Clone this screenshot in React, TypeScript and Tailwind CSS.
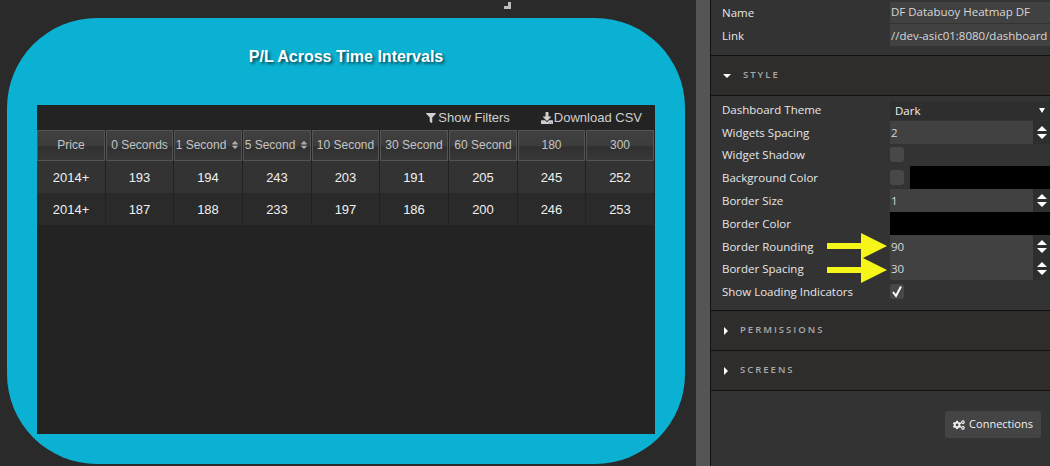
import { FaCogs, FaDownload, FaFilter, FaSort } from 'react-icons/fa';

const columns = ['Price', '0 Seconds', '1 Second', '5 Second', '10 Second', '30 Second', '60 Second', '180', '300'];
const sortable = ['1 Second', '5 Second'];
const rows = [
  ['2014+', '193', '194', '243', '203', '191', '205', '245', '252'],
  ['2014+', '187', '188', '233', '197', '186', '200', '246', '253'],
];

function Spinner() {
  return (
    <div className="flex h-full w-[17px] shrink-0 flex-col items-center justify-center gap-[3px] bg-[#2e2e2e]">
      <div className="h-0 w-0 border-x-[5px] border-b-[5px] border-x-transparent border-b-white" />
      <div className="h-0 w-0 border-x-[5px] border-t-[5px] border-x-transparent border-t-white" />
    </div>
  );
}

function NumberField({ value }: { value: string }) {
  return (
    <div className="flex h-full items-center">
      <div className="flex h-full flex-1 items-center bg-[#414141] pl-[1px] text-[11.5px] text-[#d8d8d8]">{value}</div>
      <Spinner />
    </div>
  );
}

function Checkbox({ checked }: { checked?: boolean }) {
  return (
    <div className="flex h-[15px] w-[14px] shrink-0 items-center justify-center rounded-[3px] bg-[#484848]">
      {checked && (
        <svg width="12" height="13" viewBox="0 0 12 13">
          <path d="M2 7 L5 11 L10 1.5" fill="none" stroke="#fff" strokeWidth="2" />
        </svg>
      )}
    </div>
  );
}

function Row({ label, children }: { label: string; children?: React.ReactNode }) {
  return (
    <div className="flex h-[22.8px] items-center">
      <div className="w-[179px] shrink-0 pl-[11px] text-[11.5px] text-[#e6e6e6]">{label}</div>
      <div className="h-full flex-1 overflow-hidden">{children}</div>
    </div>
  );
}

function Section({ title, open }: { title: string; open?: boolean }) {
  return (
    <div className="flex h-[40px] items-center gap-[11px] border-b border-[#111] bg-[#2e2d2c] pl-[12px]">
      {open ? (
        <div className="h-0 w-0 border-x-[4px] border-t-[4px] border-x-transparent border-t-white" />
      ) : (
        <div className="ml-[1px] h-0 w-0 border-y-[4px] border-l-[4px] border-y-transparent border-l-white" />
      )}
      <span className="pl-[1px] text-[9.5px] font-semibold tracking-[2px] text-[#a9a9a9]">{title}</span>
    </div>
  );
}

function Arrow({ top }: { top: number }) {
  return (
    <svg className="absolute left-[827px]" style={{ top }} width="62" height="26" viewBox="0 0 62 26">
      <path d="M0 10 H34 V0 L60 13 L34 26 V16 H0 Z" fill="#f5f51a" />
    </svg>
  );
}

export default function App() {
  return (
    <div className="relative flex h-[466px] w-[1050px] overflow-hidden bg-[#2a2a2a] font-['Liberation_Sans',sans-serif]">
      {/* canvas */}
      <div className="w-[696px] shrink-0 pl-[7px] pt-[18px]">
        <div className="flex h-[446px] w-[678px] flex-col rounded-[90px] bg-[#0bb1d2] p-[30px]">
          <div className="flex h-[57px] shrink-0 items-start justify-center text-[16px] font-bold text-white [text-shadow:2px_2px_3px_rgba(0,0,0,0.6)]">
            <span className="-mt-[3px]">P/L Across Time Intervals</span>
          </div>
          <div className="flex-1 bg-[#232323]">
            <div className="flex h-[25px] items-center justify-end pr-[13px] text-[13px] text-[#cfcfcf]">
              <FaFilter className="mr-[2px] text-[10px]" />
              <span>Show Filters</span>
              <FaDownload className="ml-[31px] mr-[1px] text-[12px]" />
              <span>Download CSV</span>
            </div>
            <div className="grid grid-cols-[69px_68px_69px_69px_68px_69px_69px_68px_69px]">
              {columns.map((col) => (
                <div
                  key={col}
                  className="mr-[1px] flex h-[31px] items-center justify-center gap-[4px] border border-[#555] bg-[linear-gradient(#404040,#3c3c3c_50%,#303030_55%,#383838)] pb-[2px] text-[12px] text-[#c4c4c4]"
                >
                  <span className="whitespace-nowrap">{col}</span>
                  {sortable.includes(col) && <FaSort className="text-[10px] text-[#aaa]" />}
                </div>
              ))}
              {rows.map((row, i) =>
                row.map((cell, j) => (
                  <div
                    key={`${i}-${j}`}
                    className={`flex h-[32px] items-center justify-center border-r border-[#222] pt-[1px] text-[13px] text-[#f0f0f0] ${i === 0 ? 'bg-[#333333]' : 'bg-[#2a2a2a]'}`}
                  >
                    {cell}
                  </div>
                )),
              )}
            </div>
          </div>
        </div>
      </div>

      {/* splitter */}
      <div className="w-[14px] shrink-0 bg-[#555555]" />

      {/* settings panel */}
      <div className="flex-1 border-l border-[#111] bg-[#333333] font-['Open_Sans',sans-serif]">
        <div className="h-[56px] border-b border-[#111] pt-[1.5px]">
          <Row label="Name">
            <div className="flex h-[21px] items-center whitespace-nowrap bg-[#414141] pl-[1px] text-[11.5px] text-[#d8d8d8]">DF Databuoy Heatmap DF</div>
          </Row>
          <Row label="Link">
            <div className="flex h-[22px] items-center whitespace-nowrap bg-[#414141] pl-[1px] text-[11.5px] text-[#d8d8d8]">//dev-asic01:8080/dashboard</div>
          </Row>
        </div>
        <Section title="STYLE" open />
        <div className="h-[215px] border-b border-[#111] pt-[2px]">
          <Row label="Dashboard Theme">
            <div className="mt-[3px] flex h-[19px] items-center justify-between bg-[#2e2e2e] pl-[5px] pr-[5px] text-[11.5px] font-medium text-[#f0f0f0]">
              <span>Dark</span>
              <div className="h-0 w-0 border-x-[3.5px] border-t-[5px] border-x-transparent border-t-white" />
            </div>
          </Row>
          <Row label="Widgets Spacing"><NumberField value="2" /></Row>
          <Row label="Widget Shadow">
            <div className="flex h-full items-center"><Checkbox /></div>
          </Row>
          <Row label="Background Color">
            <div className="flex h-full items-center gap-[6px]">
              <Checkbox />
              <div className="h-full flex-1 bg-black" />
            </div>
          </Row>
          <Row label="Border Size"><NumberField value="1" /></Row>
          <Row label="Border Color"><div className="h-full bg-black" /></Row>
          <Row label="Border Rounding"><NumberField value="90" /></Row>
          <Row label="Border Spacing"><NumberField value="30" /></Row>
          <Row label="Show Loading Indicators">
            <div className="flex h-full items-center"><Checkbox checked /></div>
          </Row>
        </div>
        <Section title="PERMISSIONS" />
        <Section title="SCREENS" />
        <div className="flex justify-end pr-[9px] pt-[20px]">
          <div className="flex h-[27px] w-[96px] items-center justify-center gap-[4px] rounded-[3px] bg-[#444444] text-[11px] text-[#f0f0f0]">
            <FaCogs className="text-[12px]" />
            <span>Connections</span>
          </div>
        </div>
      </div>

      {/* resize handle on the widget */}
      <svg className="absolute left-[504px] top-[2px]" width="7" height="7" viewBox="0 0 7 7">
        <path d="M7 0 V7 H0 V4 H4 V0 Z" fill="#bdbdbd" />
      </svg>

      {/* annotation arrows */}
      <Arrow top={233} />
      <Arrow top={257} />
    </div>
  );
}
